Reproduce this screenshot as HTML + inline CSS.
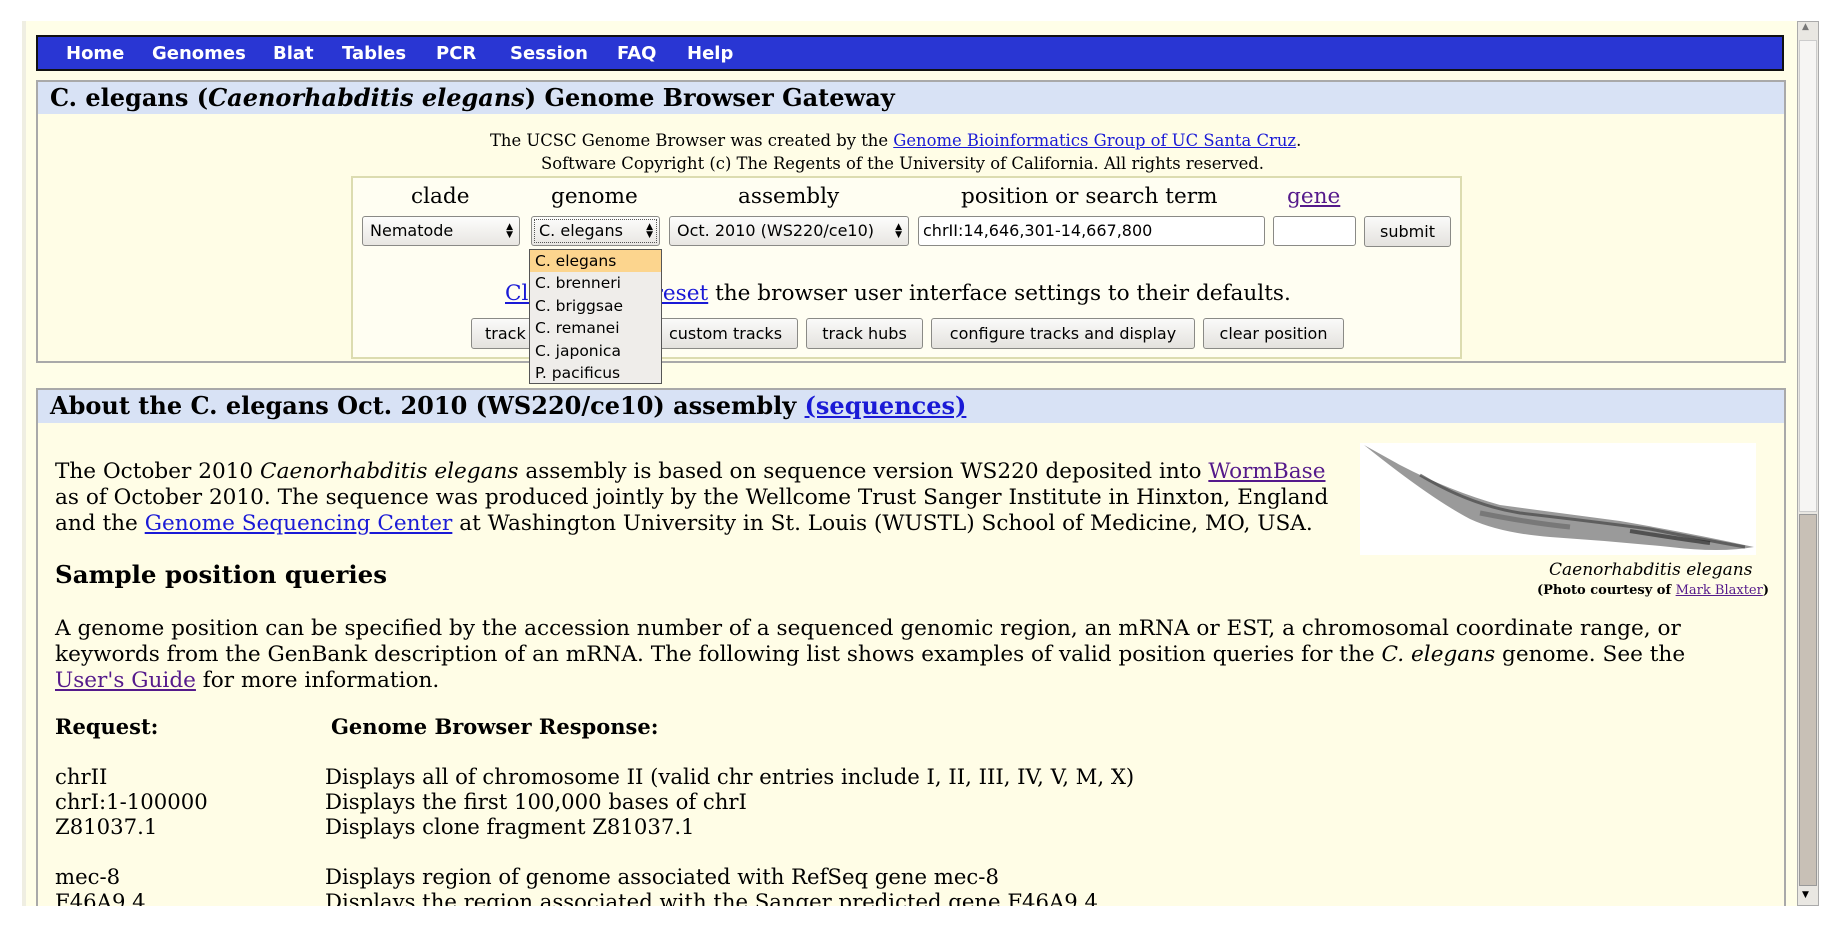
<!DOCTYPE html>
<html><head><meta charset="utf-8"><style>
*{margin:0;padding:0;box-sizing:border-box}
body{width:1842px;height:928px;background:#fff;position:relative;overflow:hidden;font-family:"DejaVu Serif","Liberation Serif",serif;color:#000}
.a{position:absolute;white-space:nowrap}
.page{position:absolute;left:22px;top:21px;width:1776px;height:885px;background:#fffee8;border-left:4px solid #efeee2}
.nav{left:36px;top:35px;width:1748px;height:36px;background:#2936d3;border:2px solid #111}
.nav span{position:absolute;top:6px;color:#fff;font:bold 18px "DejaVu Sans","Liberation Sans",sans-serif}
.box{border:2px solid #a9a9a9;background:#fffde6}
.tbar{background:#d8e2f5}
a,.lk{color:#1a1ad6;text-decoration:underline}
.v{color:#551a8b;text-decoration:underline}
.sel,.inp,.btn{position:absolute;border:1px solid #8a8a86;border-radius:3px;font:16px "DejaVu Sans","Liberation Sans",sans-serif;padding-left:7px;line-height:28px}
.sel{background:linear-gradient(#fdfdfc,#e8e6e2)}
.btn{background:linear-gradient(#fafaf9,#e4e2de);text-align:center;padding:0;line-height:29px}
.inp{background:#fff;padding-left:4px}
.arr{position:absolute;right:6px;top:6px;font-size:9px;line-height:8px}
.p{font-size:21.6px;line-height:26px}
</style></head><body>
<div class="page"></div>
<div class="a nav">
<span style="left:28px">Home</span><span style="left:114px">Genomes</span><span style="left:235px">Blat</span><span style="left:304px">Tables</span><span style="left:398px">PCR</span><span style="left:472px">Session</span><span style="left:579px">FAQ</span><span style="left:649px">Help</span>
</div>
<!-- Box 1 -->
<div class="a box" style="left:36px;top:80px;width:1750px;height:283px"></div>
<div class="a tbar" style="left:38px;top:82px;width:1746px;height:32px"></div>
<div class="a" style="left:50px;top:83px;font-size:24px;font-weight:bold">C. elegans (<i>Caenorhabditis elegans</i>) Genome Browser Gateway</div>
<div class="a" style="left:490px;top:131px;font-size:16.4px;">The UCSC Genome Browser was created by the <a>Genome Bioinformatics Group of UC Santa Cruz</a>.</div>
<div class="a" style="left:541px;top:154px;font-size:16.4px;">Software Copyright (c) The Regents of the University of California. All rights reserved.</div>
<div class="a" style="left:351px;top:176px;width:1111px;height:183px;border:2px solid #dcdcb0;background:#fffef2"></div>
<div class="a p" style="left:411px;top:184px">clade</div>
<div class="a p" style="left:551px;top:184px">genome</div>
<div class="a p" style="left:738px;top:184px">assembly</div>
<div class="a p" style="left:961px;top:184px">position or search term</div>
<div class="a p v" style="left:1287px;top:184px">gene</div>
<div class="sel" style="left:362px;top:216px;width:158px;height:30px">Nematode<span class="arr">▲<br>▼</span></div>
<div class="sel" style="left:531px;top:216px;width:129px;height:30px;outline:1px dotted #555;outline-offset:-4px">C. elegans<span class="arr">▲<br>▼</span></div>
<div class="sel" style="left:669px;top:216px;width:240px;height:30px">Oct. 2010 (WS220/ce10)<span class="arr">▲<br>▼</span></div>
<div class="inp" style="left:918px;top:216px;width:347px;height:30px">chrII:14,646,301-14,667,800</div>
<div class="inp" style="left:1273px;top:216px;width:83px;height:30px"></div>
<div class="btn" style="left:1364px;top:216px;width:87px;height:31px">submit</div>
<div class="a p" style="left:505px;top:281px"><a>Click here to reset</a> the browser user interface settings to their defaults.</div>
<div class="btn" style="left:471px;top:318px;width:176px;height:31px;text-align:left;padding-left:13px">track search</div>
<div class="btn" style="left:653px;top:318px;width:145px;height:31px">custom tracks</div>
<div class="btn" style="left:806px;top:318px;width:117px;height:31px">track hubs</div>
<div class="btn" style="left:931px;top:318px;width:264px;height:31px">configure tracks and display</div>
<div class="btn" style="left:1203px;top:318px;width:141px;height:31px">clear position</div>
<!-- dropdown -->
<div class="a" style="left:529px;top:249px;width:133px;height:135px;background:#efedea;border:1px solid #555;font:15.5px 'DejaVu Sans','Liberation Sans',sans-serif;line-height:22.4px">
<div style="background:#fcd58e;padding-left:5px">C. elegans</div>
<div style="padding-left:5px">C. brenneri</div><div style="padding-left:5px">C. briggsae</div><div style="padding-left:5px">C. remanei</div><div style="padding-left:5px">C. japonica</div><div style="padding-left:5px">P. pacificus</div>
</div>
<!-- Box 2 -->
<div class="a box" style="left:36px;top:388px;width:1750px;height:530px"></div>
<div class="a tbar" style="left:38px;top:390px;width:1746px;height:33px"></div>
<div class="a" style="left:50px;top:391px;font-size:24px;font-weight:bold">About the C. elegans Oct. 2010 (WS220/ce10) assembly <a>(sequences)</a></div>
<div class="a p" style="left:55px;top:459px;white-space:nowrap">The October 2010 <i>Caenorhabditis elegans</i> assembly is based on sequence version WS220 deposited into <span class="v">WormBase</span><br>as of October 2010. The sequence was produced jointly by the Wellcome Trust Sanger Institute in Hinxton, England<br>and the <a>Genome Sequencing Center</a> at Washington University in St. Louis (WUSTL) School of Medicine, MO, USA.</div>
<svg class="a" style="left:1360px;top:443px" width="396" height="112" viewBox="0 0 396 112">
<rect width="396" height="112" fill="#fff"/>
<path d="M4 2 L40 22 Q90 48 140 62 Q200 70 260 78 Q330 90 394 104 Q360 110 310 104 Q250 98 190 94 Q140 90 110 76 Q70 55 4 2Z" fill="#9a9a9a"/>
<path d="M60 32 Q110 62 160 70 Q230 78 290 86 Q340 96 385 104" stroke="#444" stroke-width="3" fill="none" opacity=".7"/>
<path d="M120 70 Q170 80 210 84" stroke="#555" stroke-width="5" fill="none" opacity=".5"/>
<path d="M270 88 Q320 96 350 100" stroke="#222" stroke-width="4" fill="none" opacity=".6"/>
</svg>
<div class="a" style="left:1549px;top:560px;font-size:17px;font-style:italic">Caenorhabditis elegans</div>
<div class="a" style="left:1537px;top:583px;font-size:13px;font-weight:bold">(Photo courtesy of <span class="v" style="font-weight:normal">Mark Blaxter</span>)</div>
<div class="a" style="left:55px;top:560px;font-size:24.5px;font-weight:bold">Sample position queries</div>
<div class="a p" style="left:55px;top:616px">A genome position can be specified by the accession number of a sequenced genomic region, an mRNA or EST, a chromosomal coordinate range, or<br>keywords from the GenBank description of an mRNA. The following list shows examples of valid position queries for the <i>C. elegans</i> genome. See the<br><span class="v">User's Guide</span> for more information.</div>
<div class="a p" style="left:55px;top:714px;font-weight:bold;font-size:21px">Request:</div>
<div class="a p" style="left:331px;top:714px;font-weight:bold;font-size:21px">Genome Browser Response:</div>
<div class="a" style="left:0;top:764px;width:1786px;height:142px;overflow:hidden">
<div class="a p" style="left:55px;top:0;line-height:25px;font-size:21.2px">chrII<br>chrI:1-100000<br>Z81037.1<br><br>mec-8<br>F46A9.4</div>
<div class="a p" style="left:325px;top:0;line-height:25px;font-size:21.2px">Displays all of chromosome II (valid chr entries include I, II, III, IV, V, M, X)<br>Displays the first 100,000 bases of chrI<br>Displays clone fragment Z81037.1<br><br>Displays region of genome associated with RefSeq gene mec-8<br>Displays the region associated with the Sanger predicted gene F46A9.4</div>
</div>
<div class="a" style="left:0;top:906px;width:1842px;height:22px;background:#fff"></div>
<!-- scrollbar -->
<div class="a" style="left:1797px;top:21px;width:22px;height:885px;background:#e9e7e2;border:1px solid #aaa"></div>
<div class="a" style="left:1799px;top:40px;width:18px;height:472px;background:#f6f5f3;border:1px solid #ccc"></div>
<div class="a" style="left:1799px;top:514px;width:18px;height:372px;background:#c8c0b6;border:1px solid #999"></div>
<div class="a" style="left:1802px;top:22px;font-size:9px;color:#777">▲</div>
<div class="a" style="left:1802px;top:890px;font-size:9px">▼</div>
</body></html>
